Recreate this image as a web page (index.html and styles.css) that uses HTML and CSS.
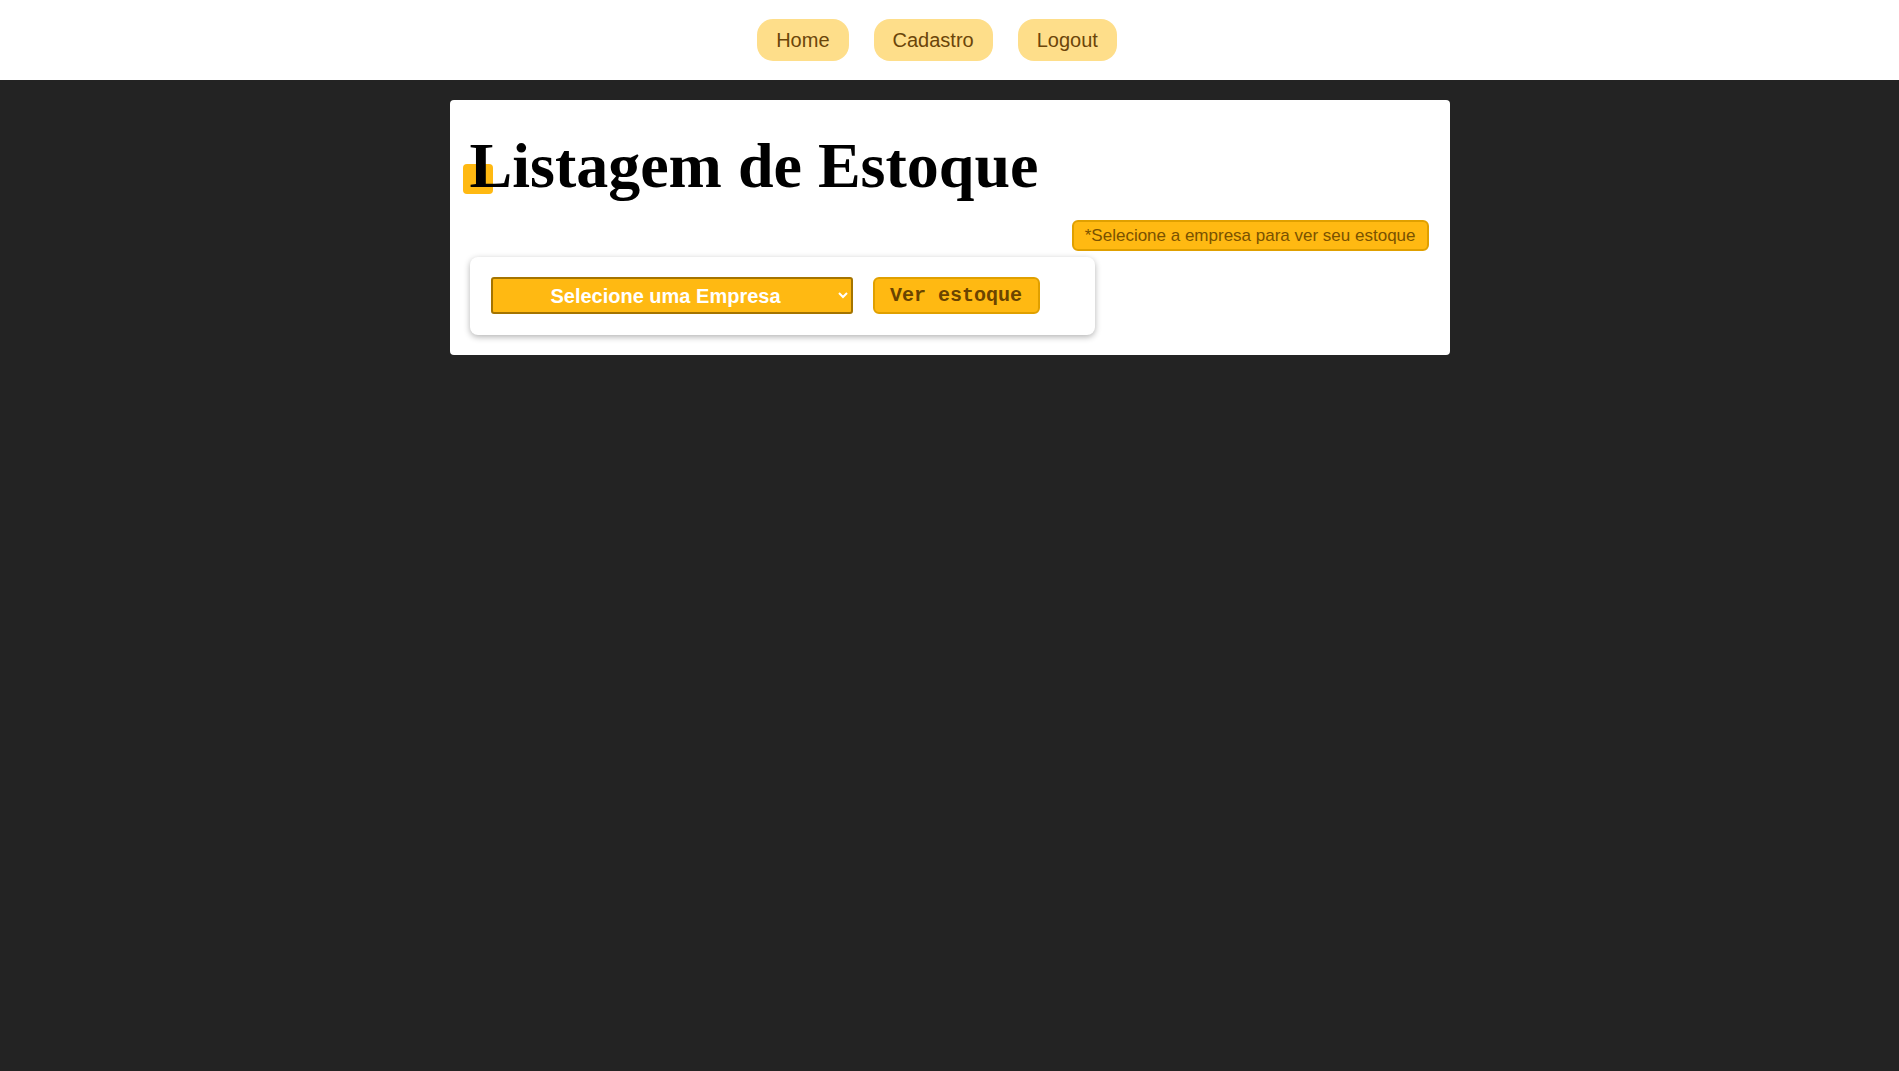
FILE: index.html
```html
<!DOCTYPE html>
<html lang="pt-BR">
<head>
<meta charset="utf-8">
<title>Listagem de Estoque</title>
<link rel="stylesheet" href="styles.css">
</head>
<body>
<header class="topbar">
  <nav class="nav">
    <a class="nav-link" href="#">Home</a>
    <a class="nav-link" href="#">Cadastro</a>
    <a class="nav-link" href="#">Logout</a>
  </nav>
</header>
<main class="page">
  <section class="card">
    <h1 class="title">Listagem de Estoque</h1>
    <div class="hint-row">
      <span class="hint">*Selecione a empresa para ver seu estoque</span>
    </div>
    <form class="form-card">
      <select class="company-select">
        <option>Selecione uma Empresa</option>
      </select>
      <button type="button" class="view-btn">Ver estoque</button>
    </form>
  </section>
</main>
</body>
</html>
```
FILE: styles.css
```css
html, body {
  margin: 0;
  padding: 0;
}
body {
  background: #232323;
  font-family: "Liberation Sans", Arial, sans-serif;
  min-height: 1071px;
}
.topbar {
  background: #ffffff;
  height: 80px;
  display: flex;
  align-items: center;
  justify-content: center;
}
.nav {
  display: flex;
  gap: 25px;
  padding-right: 25px;
}
.nav-link {
  display: flex;
  align-items: center;
  height: 42px;
  padding: 0 19px;
  border-radius: 16px;
  background: #fede8a;
  color: #6b4509;
  font-size: 20px;
  text-decoration: none;
}
.page {
  display: flex;
  justify-content: center;
  padding-top: 20px;
}
.card {
  width: 1000px;
  box-sizing: border-box;
  background: #ffffff;
  border-radius: 4px;
  padding: 20px;
}
.title {
  position: relative;
  z-index: 0;
  margin: 11px 0 0 0;
  font-family: "Liberation Serif", "Times New Roman", serif;
  font-weight: bold;
  font-size: 64px;
  line-height: 70px;
  letter-spacing: 0;
  color: #000;
}
.title::before {
  content: "";
  position: absolute;
  z-index: -1;
  left: -7px;
  top: 33px;
  width: 30px;
  height: 30px;
  border-radius: 4px;
  background: #ffb912;
}
.hint-row {
  display: flex;
  justify-content: flex-end;
  margin-top: 19px;
  margin-right: 1px;
}
.hint {
  display: flex;
  align-items: center;
  height: 31px;
  box-sizing: border-box;
  padding: 0 11px;
  border: 2px solid #e0a000;
  border-radius: 6px;
  background: #ffb912;
  color: #7a5200;
  font-size: 17px;
}
.form-card {
  margin-top: 6px;
  width: 625px;
  box-sizing: border-box;
  padding: 20px 21px 21px;
  border-radius: 8px;
  background: #ffffff;
  box-shadow: 0 2px 6px rgba(0, 0, 0, 0.3);
  display: flex;
  align-items: center;
  gap: 20px;
}
.company-select {
  width: 362px;
  height: 37px;
  box-sizing: border-box;
  border: 2px solid #a47400;
  border-radius: 3px;
  background-color: #ffb912;
  color: #ffffff;
  font-family: "Liberation Sans", Arial, sans-serif;
  font-weight: bold;
  font-size: 20px;
  text-align: center;
  text-align-last: center;
}
.view-btn {
  width: 167px;
  height: 37px;
  box-sizing: border-box;
  border: 2px solid #e0a000;
  border-radius: 6px;
  background: #ffb912;
  color: #6b4400;
  font-family: "Liberation Mono", "Courier New", monospace;
  font-weight: bold;
  font-size: 20px;
  padding: 0;
}
```
